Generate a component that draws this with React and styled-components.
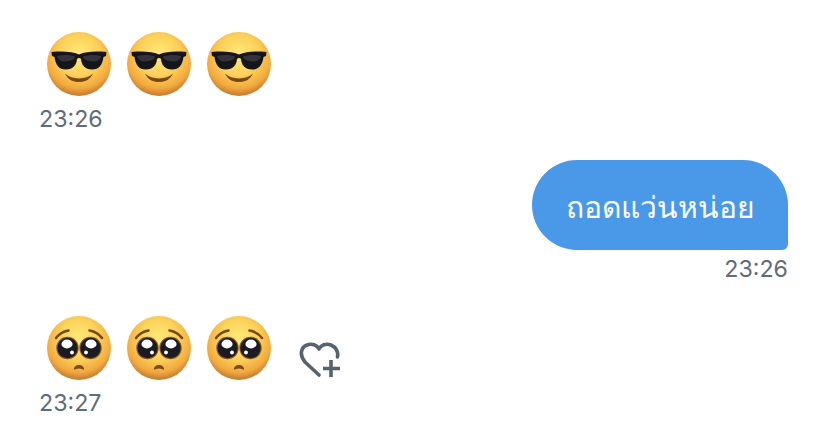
import React from 'react'
import styled, { createGlobalStyle } from 'styled-components'

const Global = createGlobalStyle`
  html, body {
    margin: 0;
    background: #fff;
  }
  body {
    font-family: Inter, "Liberation Sans", "Noto Sans", sans-serif;
  }
`

const Page = styled.div`
  width: 828px;
  height: 431px;
  box-sizing: border-box;
  padding: 30px 40px 0;
  overflow: hidden;
  display: flex;
  flex-direction: column;
`

const Incoming = styled.div`
  display: flex;
  flex-direction: column;
  align-items: flex-start;
`

const Outgoing = styled.div`
  display: flex;
  flex-direction: column;
  align-items: flex-end;
  margin-top: 26px;
`

const LastIncoming = styled(Incoming)`
  margin-top: 30px;
`

const EmojiRow = styled.div`
  display: flex;
  align-items: center;
  gap: 12px;
  padding-left: 5px;
  height: 68px;
`

const Bubble = styled.div`
  width: 256px;
  height: 90px;
  box-sizing: border-box;
  padding-top: 4px;
  display: flex;
  align-items: center;
  justify-content: center;
  background: #4a99e9;
  color: #fff;
  font-family: "Noto Sans", sans-serif;
  font-size: 30px;
  font-weight: 500;
  border-radius: 45px 45px 6px 45px;
`

const Time = styled.div`
  font-size: 23.2px;
  line-height: 30px;
  color: #5f6c7b;
  margin-top: ${(p) => p.$top || 6}px;
  margin-left: -1px;
`

const HeartButton = styled.div`
  display: flex;
  margin-left: 14px;
  margin-top: 24px;
`

const Face = ({ id, children }) => (
  <svg width="68" height="68" viewBox="0 0 68 68">
    <defs>
      <radialGradient id={id} cx="50%" cy="36%" r="62%">
        <stop offset="0%" stopColor="#ffe97c" />
        <stop offset="50%" stopColor="#fbd25a" />
        <stop offset="84%" stopColor="#f3a83e" />
        <stop offset="100%" stopColor="#c98133" />
      </radialGradient>
    </defs>
    <circle cx="34" cy="34" r="32" fill={`url(#${id})`} />
    {children}
  </svg>
)

const CoolEmoji = ({ id }) => (
  <Face id={id}>
    <path d="M6.5 22 C18 21 27 21.5 34 24.5 C41 21.5 50 21 61.5 22 L61 26 L58.5 27 C57.5 35 54 39.5 47 39.5 C40 39.5 36.5 35 36 29 C35 27.5 33 27.5 32 29 C31.5 35 28 39.5 21 39.5 C14 39.5 10.5 35 9.5 27 L7 26 Z" fill="#15151a" />
    <path d="M12 26 C18 24.5 25 24.5 30 26.5 C29.5 30 25 31 20 31.5 C15.5 31.5 12.5 29.5 12 26 Z" fill="#33333b" />
    <path d="M38 26.5 C43 24.5 50 24.5 56 26 C55.5 29.5 52.5 31.5 48 31.5 C43 31 38.5 30 38 26.5 Z" fill="#33333b" />
    <path d="M20 43.5 C27 50 41 50 48 43.5 C45 50 40 52 34 52 C28 52 23 50 20 43.5 Z" fill="#7a4a14" />
  </Face>
)

const Eye = ({ cx, flip }) => (
  <g>
    <circle cx={cx} cy="34" r="11.2" fill="#8d5a1e" />
    <circle cx={cx} cy="34" r="10.2" fill="#1c1a22" />
    <ellipse cx={cx + (flip ? 0.5 : -0.5)} cy="30" rx="5.6" ry="4.4" fill="#fff" />
    <circle cx={cx + (flip ? -4.5 : 4.5)} cy="38.5" r="1.9" fill="#fff" />
  </g>
)

const PleadingEmoji = ({ id }) => (
  <Face id={id}>
    <path d="M11 24 C14 20 18 17.5 23.5 16.5" fill="none" stroke="#7a4a14" strokeWidth="2.6" strokeLinecap="round" />
    <path d="M57 24 C54 20 50 17.5 44.5 16.5" fill="none" stroke="#7a4a14" strokeWidth="2.6" strokeLinecap="round" />
    <Eye cx={22.5} />
    <Eye cx={45.5} flip />
    <path d="M29.5 55 C30.5 50.5 37.5 50.5 38.5 55 C36 53.6 32 53.6 29.5 55 Z" fill="#7a4a14" stroke="#7a4a14" strokeWidth="1.4" strokeLinejoin="round" />
  </Face>
)

const HeartPlus = () => (
  <svg width="42" height="36" viewBox="0 0 42 36" fill="none" stroke="#55626f" strokeWidth="3.6">
    <path d="M20 33 L6 20 C0 13 2 5 8 3 C13 1 18 3 20 7 C22 3 27 1 32 3 C37 5 39.5 10 38.5 15" strokeLinecap="round" strokeLinejoin="round" />
    <path d="M32 18 V35 M24 26.5 H41" />
  </svg>
)

const App = () => {
  return (
    <Page>
      <Global />
      <Incoming>
        <EmojiRow>
          <CoolEmoji id="cool1" />
          <CoolEmoji id="cool2" />
          <CoolEmoji id="cool3" />
        </EmojiRow>
        <Time>23:26</Time>
      </Incoming>

      <Outgoing>
        <Bubble>ถอดแว่นหน่อย</Bubble>
        <Time $top={4}>23:26</Time>
      </Outgoing>

      <LastIncoming>
        <EmojiRow>
          <PleadingEmoji id="plead1" />
          <PleadingEmoji id="plead2" />
          <PleadingEmoji id="plead3" />
          <HeartButton>
            <HeartPlus />
          </HeartButton>
        </EmojiRow>
        <Time>23:27</Time>
      </LastIncoming>
    </Page>
  )
}

export default App
